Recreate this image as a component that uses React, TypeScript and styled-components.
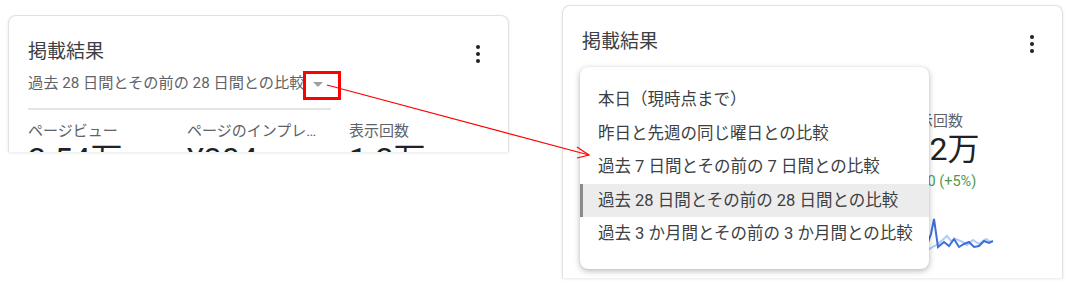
import React from "react"
import styled, { createGlobalStyle } from "styled-components"

const GlobalStyle = createGlobalStyle`
  body {
    margin: 0;
    background: #fff;
    font-family: Roboto, "Noto Sans CJK JP", sans-serif;
  }
`

const Page = styled.div`
  position: relative;
  width: 1072px;
  height: 286px;
  overflow: hidden;
  display: flex;
  align-items: flex-start;
  gap: 53px;
  padding-left: 8px;
  box-sizing: border-box;
`

const Card = styled.div<{ $top: number; $height: number }>`
  position: relative;
  flex: none;
  width: 501px;
  height: ${(p) => p.$height}px;
  margin-top: ${(p) => p.$top}px;
  box-sizing: border-box;
  padding: 22px 18px 0 19px;
  background: #fff;
  border: 1px solid #e2e2e2;
  border-bottom: none;
  border-radius: 8px 8px 0 0;
  box-shadow: 0 1px 3px rgba(60, 64, 67, 0.12);
  overflow: hidden;
`

const TitleRow = styled.div`
  display: flex;
  justify-content: space-between;
  height: 28px;
`

const Title = styled.div`
  font-size: 19px;
  line-height: 28px;
  color: #3c4043;
`

const MoreButton = styled.div`
  width: 24px;
  padding-top: 7px;
  display: flex;
  justify-content: center;
  align-items: flex-start;
`

const RangePicker = styled.div<{ $hidden?: boolean }>`
  display: inline-flex;
  align-items: center;
  margin-top: 7px;
  padding: 0 8px 15px 0;
  border-bottom: 2px solid #e4e4e4;
  font-size: 15.2px;
  line-height: 20px;
  color: #5f6368;
  white-space: nowrap;
  visibility: ${(p) => (p.$hidden ? "hidden" : "visible")};
`

const Caret = styled.span`
  width: 0;
  height: 0;
  margin-left: 9px;
  margin-top: 3px;
  border-left: 5px solid transparent;
  border-right: 5px solid transparent;
  border-top: 5px solid #a0a0a0;
`

const Metrics = styled.div`
  display: grid;
  grid-template-columns: 159px 162px 1fr;
  margin-top: 11px;
`

const Metric = styled.div`
  min-width: 0;
  padding-right: 22px;
`

const Label = styled.div`
  font-size: 15px;
  line-height: 20px;
  color: #5f6368;
  white-space: nowrap;
  overflow: hidden;
  text-overflow: ellipsis;
`

const Value = styled.div`
  font-size: 32px;
  line-height: 36px;
  color: #202124;
  white-space: nowrap;
`

const Delta = styled.div`
  margin-top: 5px;
  font-size: 14.5px;
  line-height: 20px;
  color: #4f9a4f;
  white-space: nowrap;
`

const Spark = styled.svg`
  display: block;
  margin-top: 19px;
`

const Menu = styled.div`
  position: absolute;
  left: 17px;
  top: 61px;
  width: 349px;
  box-sizing: border-box;
  padding: 16px 0 18px;
  background: #fff;
  border-radius: 8px;
  box-shadow: 0 2px 6px rgba(0, 0, 0, 0.28), 0 0 1px rgba(0, 0, 0, 0.15);
`

const MenuItem = styled.div<{ $active?: boolean }>`
  height: 33.5px;
  line-height: 33.5px;
  padding-left: 18px;
  font-size: 16.5px;
  color: #3c4043;
  white-space: nowrap;
  background: ${(p) => (p.$active ? "#ececec" : "transparent")};
  box-shadow: ${(p) => (p.$active ? "inset 3px 0 0 #8a8a8a" : "none")};
`

const Highlight = styled.div`
  position: absolute;
  left: 303px;
  top: 71px;
  width: 38px;
  height: 29px;
  box-sizing: border-box;
  border: 3px solid #ff0000;
`

const Overlay = styled.svg`
  position: absolute;
  left: 0;
  top: 0;
  pointer-events: none;
`

const Dots = () => (
  <svg width="4" height="18" viewBox="0 0 4 18">
    <circle cx="2" cy="2" r="2" fill="#202124" />
    <circle cx="2" cy="9" r="2" fill="#202124" />
    <circle cx="2" cy="16" r="2" fill="#202124" />
  </svg>
)

const ranges = [
  "本日（現時点まで）",
  "昨日と先週の同じ曜日との比較",
  "過去 7 日間とその前の 7 日間との比較",
  "過去 28 日間とその前の 28 日間との比較",
  "過去 3 か月間とその前の 3 か月間との比較",
]

const Header = () => (
  <TitleRow>
    <Title>掲載結果</Title>
    <MoreButton>
      <Dots />
    </MoreButton>
  </TitleRow>
)

const MetricRow = () => (
  <Metrics>
    <Metric>
      <Label>ページビュー</Label>
      <Value>2.54万</Value>
      <Delta>+1,210 (+5%)</Delta>
    </Metric>
    <Metric>
      <Label>ページのインプレッション収益</Label>
      <Value>¥304</Value>
      <Delta>+¥12 (+4%)</Delta>
    </Metric>
    <Metric>
      <Label>表示回数</Label>
      <Value>1.2万</Value>
      <Delta>+620 (+5%)</Delta>
      <Spark width="95" height="42" viewBox="0 0 95 42">
        <polyline
          fill="none"
          stroke="#aecbfa"
          strokeWidth="2"
          points="0,30 8,28 16,33 22,36 26,38 35,33 44,25 48,30 53,28 60,31 64,34 70,29 76,33 83,28 88,31"
        />
        <polyline
          fill="none"
          stroke="#3f6fd8"
          strokeWidth="2"
          points="0,32 8,34 16,30 24,34 28,23 31,8 35,36 41,31 46,35 51,28 56,36 61,33 66,31 71,36 76,35 81,30 86,32 90,30"
        />
      </Spark>
    </Metric>
  </Metrics>
)

export default function App() {
  return (
    <>
      <GlobalStyle />
      <Page>
        <Card $top={15} $height={137}>
          <Header />
          <RangePicker>
            過去 28 日間とその前の 28 日間との比較
            <Caret />
          </RangePicker>
          <MetricRow />
        </Card>
        <Card $top={5} $height={273}>
          <Header />
          <RangePicker $hidden>
            過去 28 日間とその前の 28 日間との比較
            <Caret />
          </RangePicker>
          <MetricRow />
          <Menu>
            {ranges.map((r, i) => (
              <MenuItem key={r} $active={i === 3}>
                {r}
              </MenuItem>
            ))}
          </Menu>
        </Card>
        <Highlight />
        <Overlay width="1072" height="286" viewBox="0 0 1072 286">
          <line x1="327" y1="85" x2="589" y2="155" stroke="#ff0000" strokeWidth="1.2" />
          <polyline
            points="577,147 589,155 577,158"
            fill="none"
            stroke="#ff0000"
            strokeWidth="1.2"
          />
        </Overlay>
      </Page>
    </>
  )
}
